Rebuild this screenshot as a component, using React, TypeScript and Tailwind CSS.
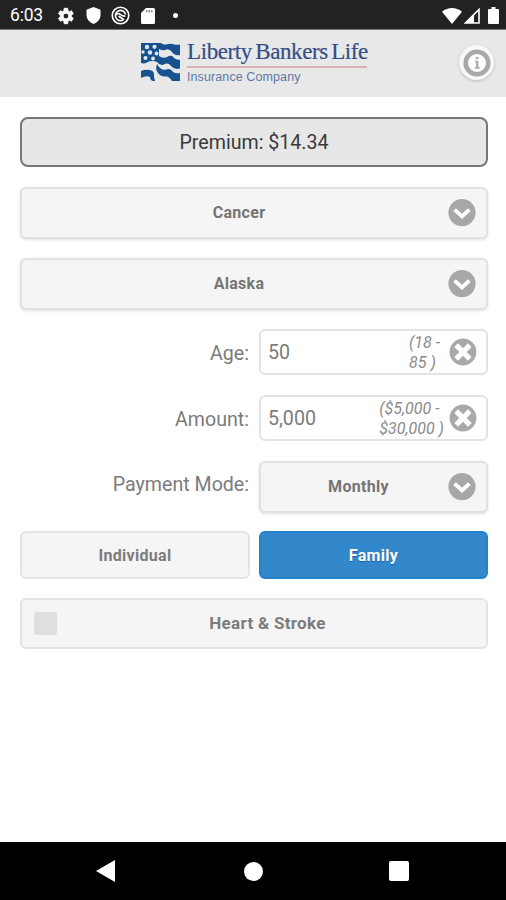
import type { ReactNode } from "react";
import clsx from "clsx";

function ChevronBadge() {
  return (
    <svg viewBox="0 0 28 28" className="h-7 w-7 shrink-0">
      <circle cx="14" cy="13.6" r="13.6" fill="#a7a7a7" />
      <path d="M6.600 10.600l7.400 6.800 7.400-6.800" fill="none" stroke="white" strokeWidth="4" />
    </svg>
  );
}

function ClearBadge() {
  return (
    <svg viewBox="0 0 28 28" className="h-7 w-7 shrink-0">
      <circle cx="14" cy="14" r="13.4" fill="#a9a9a9" />
      <path d="M7.200 7.200l13.600 13.600M20.800 7.200L7.200 20.800" stroke="white" strokeWidth="5.200" />
    </svg>
  );
}

function SelectButton({ label, className }: { label: string; className?: string }) {
  return (
    <button
      className={clsx(
        "flex items-center rounded-md border-2 border-[#e1e1e1] bg-[#f5f5f5] pr-2.5 text-[16px] font-bold tracking-[0.3px] text-[#757575] shadow-[0_1px_3px_rgba(0,0,0,0.12)]",
        className,
      )}
    >
      <span className="flex-1 pl-2">{label}</span>
      <ChevronBadge />
    </button>
  );
}

function FormRow({ label, labelClass, children }: { label: string; labelClass: string; children: ReactNode }) {
  return (
    <div className="flex items-center justify-between">
      <label className={clsx("w-[229px] text-right text-[19.6px] text-[#7b7b7b]", labelClass)}>{label}</label>
      {children}
    </div>
  );
}

function NumberField({ value, hint, className }: { value: string; hint: ReactNode; className: string }) {
  return (
    <div className="flex h-[46px] w-[229px] items-center rounded-md border-2 border-[#e4e4e4] bg-white pr-[9px] pl-[7px]">
      <span className="flex-1 pt-px text-[19.6px] text-[#7b7b7b]">{value}</span>
      <span className={clsx("pt-0.5 text-[16px] leading-5 whitespace-nowrap text-[#8a8a8a] italic", className)}>
        {hint}
      </span>
      <ClearBadge />
    </div>
  );
}

function StatusBar() {
  return (
    <div className="flex h-[30px] items-center border-b border-[#777] bg-[#222] pt-0.5 pr-[7px] pl-[10px] text-white">
      <span className="w-[47px] pt-px text-[17.5px] leading-none tracking-[-0.2px]">6:03</span>
      <svg viewBox="2.500 1.500 21 21" className="h-[18px] w-[18px]" fill="white">
        <path
          stroke="white"
          strokeWidth="1"
          d="M19.4 13a7.8 7.8 0 0 0 0-2l2.1-1.7-2-3.4-2.5 1a7.400 7.400 0 0 0-1.700-1L14.900 3h-4l-.4 2.900a7.400 7.400 0 0 0-1.700 1l-2.500-1-2 3.400L6.400 11a7.800 7.800 0 0 0 0 2l-2.100 1.700 2 3.400 2.500-1c.5.4 1.100.7 1.700 1l.4 2.900h4l.4-2.900c.6-.3 1.200-.6 1.700-1l2.500 1 2-3.400zM12.900 15.300a3.300 3.300 0 1 1 0-6.600 3.300 3.300 0 0 1 0 6.600z"
        />
      </svg>
      <svg viewBox="0 0 14 17" className="ml-[11px] h-[17px] w-[15px]" fill="white">
        <path d="M7 0L14 2.800V8c0 4-3 7.500-7 9-4-1.500-7-5-7-9V2.800z" />
      </svg>
      <svg viewBox="0 0 20 20" className="ml-2.5 h-[19px] w-[19px]" fill="none" stroke="white" strokeWidth="1.700">
        <circle cx="10" cy="10" r="8.700" />
        <path d="M13.500 14.200a5.400 5.400 0 1 1 1.800-5.200M5.500 9.500c1.500-2 3-2 4.500-.5s2.500 2 5 1.500M8 10.500l5.500 4" />
      </svg>
      <svg viewBox="0 0 14 16" className="ml-[11px] h-4 w-[14px]">
        <path d="M5 0h7.500Q14 0 14 1.500v13q0 1.500-1.500 1.500h-11Q0 16 0 14.500V5z" fill="white" />
        <path d="M5.800 2v2.600M8.300 2v2.600M10.800 2v2.600" stroke="#777" strokeWidth="1.200" />
      </svg>
      <span className="ml-[18px] h-[5px] w-[5px] rounded-full bg-white" />
      <div className="ml-auto flex items-center">
        <svg viewBox="0 0 20 16" className="h-4 w-5" fill="white">
          <path d="M0 3.800C6-1.200 14-1.200 20 3.800L10 16z" />
        </svg>
        <svg viewBox="0 0 16 16" className="ml-0.5 h-4 w-4">
          <path d="M15 1.500V15H1.500z" fill="none" stroke="white" strokeWidth="1.600" />
          <path d="M10 6.500V15H1.500z" fill="white" />
        </svg>
        <svg viewBox="0 0 11 17" className="ml-2 h-[17px] w-[11px]" fill="white">
          <path d="M3.500 0h4v2H10q1 0 1 1v13q0 1-1 1H1q-1 0-1-1V3q0-1 1-1h2.500z" />
        </svg>
      </div>
    </div>
  );
}

function FlagLogo() {
  return (
    <svg viewBox="0 0 39 39" className="h-[39px] w-[39px]">
      <g fill="#17528f">
        <path d="M0 0H18V13Q22 16 26 14Q31 11 33 15Q36 17 39 17V25.500Q33 27 30 23Q27 19 23 21.500Q19 23 16 19Q10 17 6 19.500Q3 21 0 20z" />
        <path d="M17 0H20Q22 2 25 1.500Q30 0 33 1.500Q36 2 39 1.500V12Q34 13 31 9Q28 5 24 7Q20 8 17 5z" />
        <path d="M0 28Q4 26 9 27Q13 28 13 31Q12.500 34 14 38H12Q9 37 9 34Q5 32 0 35z" />
        <path d="M16 21Q20 28 25 26.500Q30 25 32 29Q35 31 39 30V38H31Q28 33 25 33.500Q20 34 17 30Q14 27 16 21z" />
      </g>
      <g fill="#dfe8f1">
        <circle cx="6" cy="4" r="2.200" />
        <circle cx="13.500" cy="3.800" r="2.100" />
        <circle cx="2" cy="9" r="1.700" />
        <circle cx="9" cy="9.500" r="2.200" />
        <circle cx="15.500" cy="10.500" r="1.900" />
        <circle cx="4.500" cy="15" r="2" />
        <circle cx="12" cy="15.500" r="1.900" />
      </g>
    </svg>
  );
}

function Header() {
  return (
    <header className="flex h-[67px] items-start bg-[#e8e8e8] pl-[141px]">
      <div className="pt-[13px]">
        <FlagLogo />
      </div>
      <div className="ml-[7px] flex flex-col items-start pt-2">
        <span className="font-['Liberation_Serif',serif] text-[23px] leading-[28px] tracking-[-0.4px] whitespace-nowrap text-[#344e86] [-webkit-text-stroke:0.2px_#344e86] [word-spacing:-2px]">
          Liberty Bankers Life
        </span>
        <span className="h-0.5 w-[180px] bg-[#d9b1b4]" />
        <span className="font-['Liberation_Sans',sans-serif] text-[12.5px] leading-[19px] tracking-[0.1px] whitespace-nowrap text-[#6078a4]">
          Insurance Company
        </span>
      </div>
      <button className="mt-[15px] mr-[12px] ml-auto flex h-[35px] w-[35px] items-center justify-center rounded-full bg-[#f8f8f8] shadow-[0_1px_3px_rgba(0,0,0,0.2)]">
        <svg viewBox="0 0 28 28" className="h-7 w-7">
          <circle cx="14" cy="14" r="11.300" fill="white" stroke="#a9a9a9" strokeWidth="4.600" />
          <path d="M12.700 8h2.800v2.300h-2.800zM12 11.800h3.500V18h1.200v1.700h-5V18h1.300v-4.500h-1z" fill="#b0b0b0" />
        </svg>
      </button>
    </header>
  );
}

function NavBar() {
  return (
    <nav className="flex h-[58px] items-center bg-black pl-[96px]">
      <svg viewBox="0 0 19 22" className="h-[22px] w-[19px]" fill="white">
        <path d="M19 0v22L0 11z" />
      </svg>
      <span className="ml-[129px] h-[19px] w-[19px] rounded-full bg-white" />
      <span className="ml-[126px] h-5 w-5 rounded-[2px] bg-white" />
    </nav>
  );
}

export default function App() {
  return (
    <div className="flex h-[900px] w-[506px] flex-col bg-white font-[Roboto,sans-serif]">
      <StatusBar />
      <Header />
      <main className="flex flex-1 flex-col pt-5 pr-[18px] pl-5">
        <div className="flex h-[50px] items-center justify-center rounded-lg border-2 border-[#777] bg-[#e7e7e7] pt-px text-[19.6px] text-[#3a3a3a]">
          Premium: $14.34
        </div>
        <SelectButton label="Cancer" className="mt-5 h-[52px]" />
        <SelectButton label="Alaska" className="mt-[19px] h-[52px]" />

        <div className="mt-[19px] flex flex-col gap-5">
          <FormRow label="Age:" labelClass="pt-1">
            <NumberField value="50" hint={<>(18 -<br />85 )</>} className="mr-[9px]" />
          </FormRow>
          <FormRow label="Amount:" labelClass="pt-[3px]">
            <NumberField value="5,000" hint={<>($5,000 -<br />$30,000 )</>} className="mr-[5px]" />
          </FormRow>
          <FormRow label="Payment Mode:" labelClass="pb-1">
            <SelectButton label="Monthly" className="h-[52px] w-[229px]" />
          </FormRow>
        </div>

        <div className="mt-[18px] flex justify-between text-[16px] font-bold tracking-[0.3px]">
          <button className="h-12 w-[230px] rounded-md border-2 border-[#e4e4e4] bg-[#f5f5f5] pt-px text-[#7c7c7c]">
            Individual
          </button>
          <button className="h-12 w-[229px] rounded-md border-2 border-[#2482c9] bg-[#3388cc] pt-px text-white [text-shadow:0_1px_1px_#1b5f99]">
            Family
          </button>
        </div>

        <div className="mt-[19px] flex h-[51px] items-center rounded-md border-2 border-[#e4e4e4] bg-[#f5f5f5] pl-3 text-[17px] font-bold tracking-[0.3px] text-[#7c7c7c]">
          <span className="h-[23px] w-[23px] rounded-[3px] bg-[#dfdfdf]" />
          <span className="flex-1 pr-2 text-center">Heart &amp; Stroke</span>
        </div>
      </main>
      <NavBar />
    </div>
  );
}
